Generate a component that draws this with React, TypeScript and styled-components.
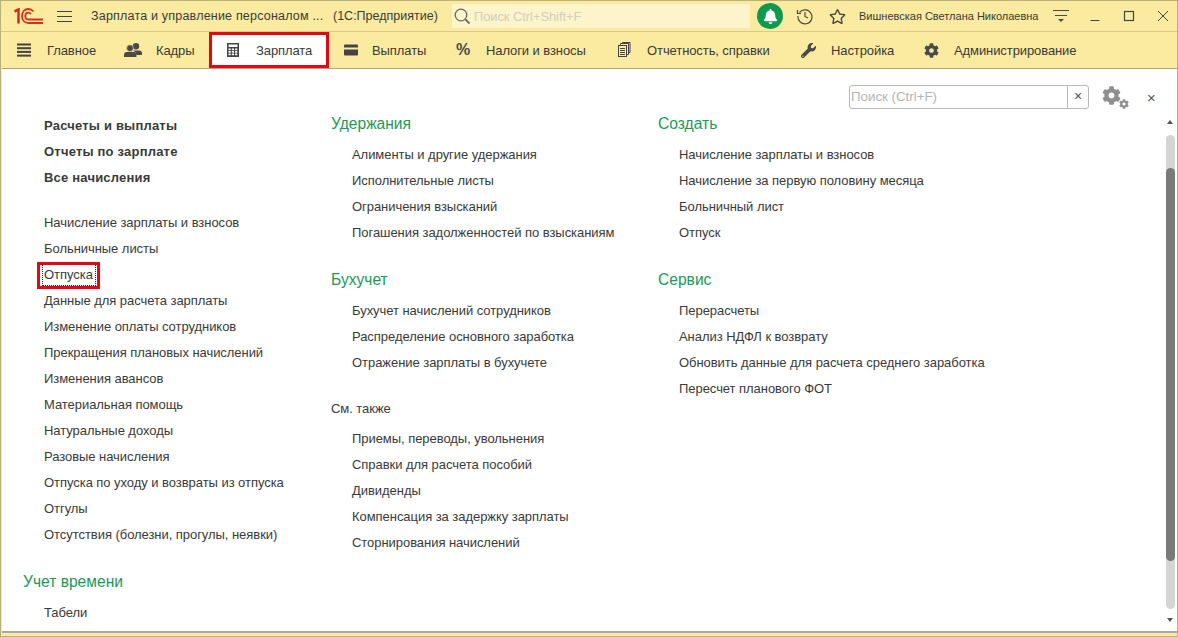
import React from 'react';
import styled, { createGlobalStyle } from 'styled-components';
import { FaCog, FaWrench, FaBell, FaRegStar } from 'react-icons/fa';

const GlobalStyle = createGlobalStyle`
  html, body { margin: 0; padding: 0; background: #faeba0; }
  * { box-sizing: border-box; }
  body { font-family: "Liberation Sans", Arial, sans-serif; color: #3a3a3a; }
`;

const sections = [
  { label: 'Главное', icon: 'menu', width: 109, iconWidth: 46 },
  { label: 'Кадры', icon: 'users', width: 99, iconWidth: 46 },
  { label: 'Зарплата', icon: 'calc', width: 120, iconWidth: 47, active: true },
  { label: 'Выплаты', icon: 'card', width: 111, iconWidth: 43 },
  { label: 'Налоги и взносы', icon: 'percent', width: 161, iconWidth: 46 },
  { label: 'Отчетность, справки', icon: 'docs', width: 184, iconWidth: 46 },
  { label: 'Настройка', icon: 'wrench', width: 123, iconWidth: 46 },
  { label: 'Администрирование', icon: 'cog', width: 170, iconWidth: 46 },
];

const SectionIcon = ({ name }: { name: string }) => {
  if (name === 'users')
    return (
      <svg width="18" height="16" viewBox="0 0 18 16" fill="#4a4a4a">
        <circle cx="12" cy="4.200" r="3.200" />
        <path d="M9 8.500h6c1.800 0 3 1 3 2.800V13h-5.500c-.3-1.800-1.500-3.200-3.500-4.500z" />
        <circle cx="6" cy="6.200" r="3.400" stroke="#faeba0" strokeWidth=".6" />
        <path d="M2.500 10h7c1.800 0 3 1.200 3 3v2H0v-2c0-1.800 1-3 2.500-3z" />
      </svg>
    );
  if (name === 'wrench') return <FaWrench size={15} color="#4a4a4a" />;
  if (name === 'cog') return <FaCog size={15} color="#4a4a4a" />;
  if (name === 'percent') return <PercentMark>%</PercentMark>;
  if (name === 'menu')
    return (
      <svg width="16" height="16" viewBox="-1 0 16 16" fill="#444">
        <rect x="0" y="1.500" width="14" height="2" />
        <rect x="0" y="5.200" width="14" height="2" />
        <rect x="0" y="8.900" width="14" height="2" />
        <rect x="0" y="12.600" width="14" height="2" />
      </svg>
    );
  if (name === 'calc')
    return (
      <svg width="14" height="16" viewBox="0 0 14 16">
        <rect x="1" y="1" width="12" height="14" fill="#444" />
        <rect x="2.500" y="2.500" width="9" height="2.500" fill="#fff" />
        {[6.500, 9, 11.500].map(y =>
          [2.500, 5.800, 9.100].map(x => <rect key={`${x}-${y}`} x={x} y={y} width="2.200" height="1.700" fill="#fff" />),
        )}
      </svg>
    );
  if (name === 'card')
    return (
      <svg width="16" height="14" viewBox="0 0 16 14">
        <rect x="1" y="1.500" width="14" height="11" rx="1" fill="#444" />
        <rect x="1" y="4.500" width="14" height="2" fill="#faeba0" />
      </svg>
    );
  return (
    <svg width="14" height="16" viewBox="0 0 14 16" fill="none" stroke="#444" strokeWidth="1">
      <rect x="1.500" y="3.500" width="8" height="11" />
      <path d="M3.500 3.500V1.500h8v11h-2M5.500 1.500V.5h7.500v10h-1.500M3 6.500h5M3 8.500h5M3 10.500h5M3 12.500h5" />
    </svg>
  );
};

const col1Top = ['Расчеты и выплаты', 'Отчеты по зарплате', 'Все начисления'];
const col1Items = [
  'Начисление зарплаты и взносов',
  'Больничные листы',
  'Отпуска',
  'Данные для расчета зарплаты',
  'Изменение оплаты сотрудников',
  'Прекращения плановых начислений',
  'Изменения авансов',
  'Материальная помощь',
  'Натуральные доходы',
  'Разовые начисления',
  'Отпуска по уходу и возвраты из отпуска',
  'Отгулы',
  'Отсутствия (болезни, прогулы, неявки)',
];

const App = () => (
  <Window>
    <GlobalStyle />
    <TitleBar>
      <Logo width="30" height="16" viewBox="0 0 30 16" fill="none" stroke="#d8301f">
        <path d="M0.500 3.500 4.500 1.500V15.500" strokeWidth="2.600" />
        <path d="M19.500 3.500C18 1.800 16 1 14.500 1 10.500 1 8 4 8 8s2.500 7 6.500 7H29" strokeWidth="1.800" />
        <path d="M17 6.200C16.200 5.200 15.400 4.600 14.500 4.600 12.500 4.600 11.300 6 11.300 8s1.200 3.500 3.200 3.500H29" strokeWidth="1.800" />
      </Logo>
      <Burger>
        <span />
        <span />
        <span />
      </Burger>
      <AppName>Зарплата и управление персоналом ...</AppName>
      <Platform>(1С:Предприятие)</Platform>
      <GlobalSearch>
        <svg width="17" height="17" viewBox="0 0 17 17" fill="none" stroke="#6d6a58" strokeWidth="1.300">
          <circle cx="7" cy="7" r="5.800" />
          <path d="M11.200 11.200 15.500 15.500" strokeWidth="1.800" />
        </svg>
        <span>Поиск Ctrl+Shift+F</span>
      </GlobalSearch>
      <BellCircle>
        <FaBell size={15} color="#fff" />
      </BellCircle>
      <History width="18" height="18" viewBox="0 0 18 18" fill="none" stroke="#4a4a4a" strokeWidth="1.200">
        <path d="M3.500 5.500A7 7 0 1 1 2 9" />
        <path d="M1.500 3v3.500H5M9 5v4.500l3 1.500" />
      </History>
      <Star size={17} color="#4a4a4a" />
      <UserName>Вишневская Светлана Николаевна</UserName>
      <svg width="16" height="16" viewBox="0 0 16 16" fill="#4a4a4a">
        <rect x="0" y="2" width="16" height="1" />
        <rect x="2" y="7" width="12" height="1" />
        <path d="M5 11h6l-3 3z" />
      </svg>
      <WindowButtons>
        <svg width="12" height="12" viewBox="0 0 12 12" stroke="#444" fill="none">
          <path d="M1.500 10.500H10.500" />
        </svg>
        <svg width="12" height="12" viewBox="0 0 12 12" stroke="#444" fill="none" strokeWidth="1.200">
          <rect x="1.500" y="1.500" width="9" height="9" />
        </svg>
        <svg width="12" height="12" viewBox="0 0 12 12" stroke="#444" fill="none">
          <path d="M1 1 11 11M11 1 1 11" />
        </svg>
      </WindowButtons>
    </TitleBar>

    <SectionBar>
      {sections.map(s => (
        <SectionTab key={s.label} $width={s.width} $active={s.active}>
          <SectionIconBox $width={s.iconWidth}>
            <SectionIcon name={s.icon} />
          </SectionIconBox>
          {s.label}
        </SectionTab>
      ))}
    </SectionBar>

    <Panel>
      <PanelTools>
        <SearchField>
          <SearchInput>Поиск (Ctrl+F)</SearchInput>
          <SearchClear>×</SearchClear>
        </SearchField>
        <GearBox>
          <FaCog size={19} color="#8f8f8f" />
          <SmallGear size={10} color="#8f8f8f" />
        </GearBox>
        <PanelClose>×</PanelClose>
      </PanelTools>

      <Columns>
        <Column $width={308}>
          <Indented>
            {col1Top.map(t => (
              <BoldLink key={t}>{t}</BoldLink>
            ))}
            <Gap />
            {col1Items.map(t =>
              t === 'Отпуска' ? (
                <LinkRow key={t}>
                  <FocusedLink>{t}</FocusedLink>
                </LinkRow>
              ) : (
                <LinkRow key={t}>{t}</LinkRow>
              ),
            )}
          </Indented>
          <GroupTitle $top={23}>Учет времени</GroupTitle>
          <Indented>
            <LinkRow>Табели</LinkRow>
          </Indented>
        </Column>

        <Column $width={327}>
          <GroupTitle>Удержания</GroupTitle>
          <Indented>
            <LinkRow>Алименты и другие удержания</LinkRow>
            <LinkRow>Исполнительные листы</LinkRow>
            <LinkRow>Ограничения взысканий</LinkRow>
            <LinkRow>Погашения задолженностей по взысканиям</LinkRow>
          </Indented>
          <GroupTitle $top={23}>Бухучет</GroupTitle>
          <Indented>
            <LinkRow>Бухучет начислений сотрудников</LinkRow>
            <LinkRow>Распределение основного заработка</LinkRow>
            <LinkRow>Отражение зарплаты в бухучете</LinkRow>
          </Indented>
          <SeeAlso>См. также</SeeAlso>
          <Indented>
            <LinkRow>Приемы, переводы, увольнения</LinkRow>
            <LinkRow>Справки для расчета пособий</LinkRow>
            <LinkRow>Дивиденды</LinkRow>
            <LinkRow>Компенсация за задержку зарплаты</LinkRow>
            <LinkRow>Сторнирования начислений</LinkRow>
          </Indented>
        </Column>

        <Column $width={400}>
          <GroupTitle>Создать</GroupTitle>
          <Indented>
            <LinkRow>Начисление зарплаты и взносов</LinkRow>
            <LinkRow>Начисление за первую половину месяца</LinkRow>
            <LinkRow>Больничный лист</LinkRow>
            <LinkRow>Отпуск</LinkRow>
          </Indented>
          <GroupTitle $top={23}>Сервис</GroupTitle>
          <Indented>
            <LinkRow>Перерасчеты</LinkRow>
            <LinkRow>Анализ НДФЛ к возврату</LinkRow>
            <LinkRow>Обновить данные для расчета среднего заработка</LinkRow>
            <LinkRow>Пересчет планового ФОТ</LinkRow>
          </Indented>
        </Column>
      </Columns>

      <Scrollbar>
        <ArrowUp />
        <Track>
          <Thumb />
        </Track>
        <ArrowDown />
      </Scrollbar>
    </Panel>
  </Window>
);

export default App;

const Window = styled.div`
  width: 1178px;
  height: 637px;
  display: flex;
  flex-direction: column;
  background: #faeba0;
  border: 1px solid #b9b27c;
  overflow: hidden;
`;
const TitleBar = styled.header`
  height: 31px;
  flex: none;
  display: flex;
  align-items: center;
  padding-left: 13px;
  border-bottom: 1px solid #d9c987;
`;
const Logo = styled.svg`
  flex: none;
`;
const Burger = styled.div`
  width: 15px;
  margin-left: 13px;
  display: flex;
  flex-direction: column;
  gap: 4px;
  span {
    height: 1px;
    background: #444;
  }
`;
const AppName = styled.div`
  margin-left: 19px;
  width: 242px;
  font-size: 12.500px;
  letter-spacing: 0.2px;
  white-space: nowrap;
`;
const Platform = styled.div`
  font-size: 12.500px;
  width: 119px;
  white-space: nowrap;
`;
const GlobalSearch = styled.div`
  width: 298px;
  height: 24px;
  background: #fdf4cb;
  display: flex;
  align-items: center;
  gap: 3px;
  padding-left: 2px;
  font-size: 12.800px;
  color: #d2cfba;
`;
const BellCircle = styled.div`
  width: 26px;
  height: 26px;
  border-radius: 50%;
  background: #0d9a4f;
  margin-left: 7px;
  display: flex;
  align-items: center;
  justify-content: center;
`;
const History = styled.svg`
  margin-left: 13px;
  flex: none;
`;
const Star = styled(FaRegStar)`
  margin-left: 15px;
  flex: none;
`;
const UserName = styled.div`
  margin-left: 13px;
  margin-right: 14px;
  font-size: 11px;
  white-space: nowrap;
  width: 180px;
`;
const WindowButtons = styled.div`
  margin-left: 20px;
  display: flex;
  gap: 22px;
`;
const SectionBar = styled.nav`
  height: 36px;
  flex: none;
  display: flex;
  align-items: center;
`;
const SectionTab = styled.div<{ $width: number; $active?: boolean }>`
  position: relative;
  width: ${p => p.$width}px;
  height: 36px;
  flex: none;
  display: flex;
  align-items: center;
  font-size: 13px;
  letter-spacing: -0.09px;
  white-space: nowrap;
  background: ${p => (p.$active ? '#fff' : 'transparent')};
  ${p =>
    p.$active &&
    `&::after {
      content: '';
      position: absolute;
      inset: 0;
      border: 3px solid #e30613;
    }`}
`;
const SectionIconBox = styled.span<{ $width: number }>`
  width: ${p => p.$width}px;
  display: flex;
  justify-content: center;
  flex: none;
`;
const PercentMark = styled.span`
  font-size: 16px;
  font-weight: 700;
  color: #4a4a4a;
`;
const Panel = styled.main`
  position: relative;
  flex: none;
  height: 565px;
  margin: 0 0 0 1px;
  background: #fff;
  border-top: 1px solid #a9a68c;
  border-bottom: 2px solid #a8a8a8;
`;
const PanelTools = styled.div`
  position: absolute;
  top: 16px;
  right: 20px;
  display: flex;
  align-items: center;
`;
const SearchField = styled.div`
  width: 240px;
  height: 24px;
  display: flex;
  border: 1px solid #b9b9b9;
  border-radius: 3px;
`;
const SearchInput = styled.div`
  flex: 1;
  padding-left: 1px;
  line-height: 22px;
  font-size: 13.300px;
  color: #b4b4b4;
`;
const SearchClear = styled.div`
  width: 21px;
  border-left: 1px solid #b9b9b9;
  text-align: center;
  line-height: 21px;
  font-size: 14px;
  color: #555;
`;
const GearBox = styled.div`
  position: relative;
  width: 27px;
  height: 23px;
  margin-left: 13px;
`;
const SmallGear = styled(FaCog)`
  position: absolute;
  right: 0;
  bottom: 0;
`;
const PanelClose = styled.div`
  width: 10px;
  margin-left: 18px;
  font-size: 15px;
  color: #555;
`;
const Columns = styled.div`
  display: flex;
  padding: 44px 0 0 21px;
`;
const Column = styled.section<{ $width: number }>`
  width: ${p => p.$width}px;
  flex: none;
`;
const Indented = styled.div`
  padding-left: 21px;
`;
const LinkRow = styled.div`
  height: 26px;
  line-height: 26px;
  font-size: 13px;
  letter-spacing: -0.05px;
  color: #3a3a3a;
  white-space: nowrap;
`;
const BoldLink = styled(LinkRow)`
  font-weight: 700;
  letter-spacing: 0.2px;
`;
const Gap = styled.div`
  height: 19px;
`;
const FocusedLink = styled.span`
  position: relative;
  display: inline-block;
  margin-left: -2px;
  padding: 0 3px 0 2px;
  line-height: 22px;
  vertical-align: top;
  margin-top: 2px;
  outline: 1px dotted #222;
  outline-offset: -1px;
  &::after {
    content: '';
    position: absolute;
    inset: -2px -4px -3px -5px;
    border: 3px solid #e30613;
  }
`;
const GroupTitle = styled.h2<{ $top?: number }>`
  margin: ${p => p.$top ?? 0}px 0 7px;
  height: 22px;
  line-height: 22px;
  font-size: 15.600px;
  font-weight: 400;
  color: #1b9a58;
`;
const SeeAlso = styled.div`
  margin-top: 20px;
  margin-bottom: 4px;
  height: 26px;
  line-height: 26px;
  font-size: 13px;
  letter-spacing: -0.05px;
  color: #3a3a3a;
`;
const Scrollbar = styled.div`
  position: absolute;
  top: 51px;
  right: 2px;
  width: 10px;
  display: flex;
  flex-direction: column;
  align-items: center;
  gap: 9px;
`;
const ArrowUp = styled.div`
  width: 0;
  height: 0;
  margin-bottom: 2px;
  border: 3px solid transparent;
  border-top: 0;
  border-bottom: 4px solid #555;
`;
const ArrowDown = styled.div`
  width: 0;
  height: 0;
  border: 3px solid transparent;
  border-bottom: 0;
  border-top: 4px solid #555;
`;
const Track = styled.div`
  position: relative;
  width: 9px;
  height: 474px;
  border-radius: 5px;
  background: #d5d5d5;
`;
const Thumb = styled.div`
  position: absolute;
  top: 33px;
  bottom: 48px;
  left: 0;
  right: 0;
  border-radius: 5px;
  background: #7a7a7a;
`;
